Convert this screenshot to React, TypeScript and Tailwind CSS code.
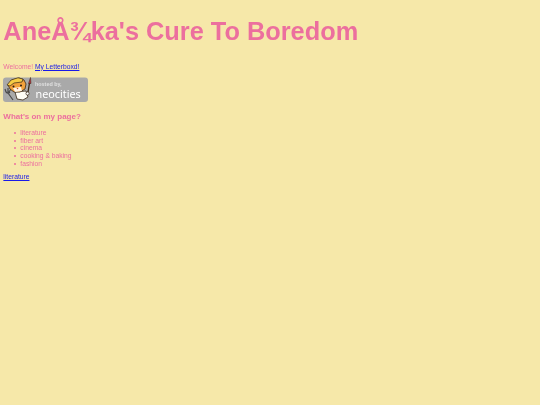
export default function App() {
  const items = ["literature", "fiber art", "cinema", "cooking & baking", "fashion"];
  return (
    <div className="min-h-[405px] bg-[#f6e8a9] px-[3.36px] font-['Liberation_Sans',Arial,sans-serif] text-[6.72px] text-[#ec6f9e]">
      <div className="blur-[0.3px]">
      <h1 className="pt-[17px] text-[25.35px] leading-[29px] font-bold">AneÅ¾ka's Cure To Boredom</h1>
      <p className="mt-[16.6px] leading-[7.7px]">
        Welcome! <a className="text-[#1a1ae8] underline" href="#">My Letterboxd!</a>
      </p>
      <a className="mt-[6.4px] block h-[25px] w-[85px]" href="#" aria-label="hosted by neocities">
        <svg viewBox="0 0 85 25" className="block h-[25px] w-[85px]">
          <rect x="0" y="0.5" width="85" height="24.5" rx="3" fill="#a9a9a9" />
          <path d="M2 12 L3 15 M5 11 L5 15 M8 12 L6 15 M3 15 Q5 17 7 15 M5 16 L10 23" stroke="#4a4a4a" strokeWidth="1.2" fill="none" />
          <path d="M12 15 L23 14 L25 20 L20 23 L14 22 Z" fill="#fffdf5" stroke="#3a2a18" strokeWidth="0.8" />
          <path d="M5 8 L9 3 L16 1 L21 3 L23 7 L22 12 L17 15 L11 15 L7 12 Z" fill="#f2a23c" stroke="#3a2a18" strokeWidth="0.8" />
          <path d="M4 8 L8 3 L15 0.8 L20 2 L19 5 L11 6 L7 9 Z" fill="#f6cc45" stroke="#3a2a18" strokeWidth="0.7" />
          <path d="M10 11 L18 10 L19 14 L12 15 Z" fill="#fff4e2" />
          <circle cx="10.5" cy="9.5" r="1" fill="#2a1a10" />
          <circle cx="18" cy="8.5" r="1" fill="#2a1a10" />
          <path d="M13.5 11 L15.5 11 L14.5 12.5 Z" fill="#c1442e" />
          <path d="M25 15 L26.5 6" stroke="#3a2a18" strokeWidth="1.3" />
          <path d="M25.5 6.5 L27.5 0.5 L28 6.5 Z" fill="#b9303c" stroke="#3a2a18" strokeWidth="0.5" />
          <circle cx="24.5" cy="16.5" r="1.6" fill="#fff" stroke="#3a2a18" strokeWidth="0.7" />
          <text x="32" y="9" fontSize="5.4" fontWeight="700" fill="#e0e0e0" fontFamily="'Liberation Sans',sans-serif">hosted by,</text>
          <text x="32.5" y="21" fontSize="10.8" fill="#ffffff" fontFamily="'Noto Sans','Liberation Sans',sans-serif">neocities</text>
        </svg>
      </a>
      <h2 className="mt-[10.2px] text-[8px] leading-[9.2px] font-bold">What's on my page?</h2>
      <ul className="mt-[7.9px] pl-[10.5px] leading-[7.7px]">
        {items.map((t) => (
          <li key={t} className="flex items-center gap-[4.5px]">
            <span className="h-[2px] w-[2px] rounded-full bg-[#ec6f9e]" />
            {t}
          </li>
        ))}
      </ul>
      <p className="mt-[6px] leading-[7.7px]">
        <a className="text-[#1a1ae8] underline" href="#">literature</a>
      </p>
      </div>
    </div>
  );
}
